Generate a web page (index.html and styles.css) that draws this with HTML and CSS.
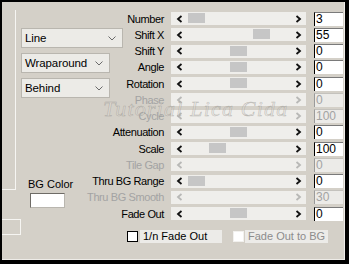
FILE: index.html
```html
<!DOCTYPE html>
<html lang="en">
<head>
  <meta charset="UTF-8" />
  <title>Tubes settings</title>
  <link rel="stylesheet" href="styles.css">
</head>
<body>
  <div class="dialog">
    <div class="side">
      <div class="frame"></div>
      <div class="controls">
        <div class="combo combo-wide"><span>Line</span><svg width="8" height="5"><polyline points="0.5,0.5 4,4 7.5,0.5" /></svg></div>
        <div class="combo"><span>Wraparound</span><svg width="8" height="5"><polyline points="0.5,0.5 4,4 7.5,0.5" /></svg></div>
        <div class="combo"><span>Behind</span><svg width="8" height="5"><polyline points="0.5,0.5 4,4 7.5,0.5" /></svg></div>
        <div class="bg-color">
          <div>BG Color</div>
          <div class="swatch"></div>
        </div>
      </div>
      <div class="stub"></div>
    </div>

    <div class="params">
      <div class="grid" id="grid"></div>
      <div class="checks">
        <label class="check"><span class="box"></span><span class="text">1/n Fade Out</span></label>
        <label class="check off"><span class="box"></span><span class="text">Fade Out to BG</span></label>
      </div>
    </div>

    <div class="watermark">Tutorial Lica Cida</div>
  </div>

  <script>
    const grid = document.getElementById("grid");

    // name, value, thumb offset (px, null = no thumb), enabled
    const rows = [
      ["Number", "3", 17, true],
      ["Shift X", "55", 82, true],
      ["Shift Y", "0", 59, true],
      ["Angle", "0", 59, true],
      ["Rotation", "0", 59, true],
      ["Phase", "0", null, false],
      ["Cycle", "100", null, false],
      ["Attenuation", "0", 59, true],
      ["Scale", "100", 38, true],
      ["Tile Gap", "0", null, false],
      ["Thru BG Range", "0", 17, true],
      ["Thru BG Smooth", "30", null, false],
      ["Fade Out", "0", 59, true]
    ];

    const arrow = pts => `<svg width="7" height="8"><polyline points="${pts}" /></svg>`;

    rows.forEach(([name, value, pos, on]) => {
      const label = document.createElement("div");
      label.className = "label" + (on ? "" : " off");
      label.innerHTML = `<span>${name}</span>`;

      const track = document.createElement("div");
      track.className = "track" + (on ? "" : " off");
      track.innerHTML = arrow("5.5,1 2,4 5.5,7") + arrow("1.5,1 5,4 1.5,7");
      if (pos !== null) {
        const thumb = document.createElement("div");
        thumb.className = "thumb";
        thumb.style.left = pos + "px";
        track.appendChild(thumb);
      }

      const val = document.createElement("div");
      val.className = "value" + (on ? "" : " off");
      val.textContent = value;

      grid.append(label, track, val);
    });
  </script>
</body>
</html>
```

FILE: styles.css
```css
body {
  margin: 0;
  background: #000;
  font-family: "Liberation Sans", Arial, sans-serif;
  font-size: 11px;
  color: #000;
}
.dialog {
  position: relative;
  display: flex;
  width: 343px;
  height: 258px;
  margin: 2px 4px 4px 2px;
  background: #d4d0c8;
  box-sizing: border-box;
  border-right: 1px solid #eeece8;
  border-bottom: 1px solid #eeece8;
  overflow: hidden;
}
.side {
  width: 108px;
  flex: none;
  display: grid;
  grid-template-columns: 14px 1fr;
  align-content: start;
  padding-top: 8px;
}
.frame {
  height: 179px;
  border-right: 1px solid #f6f5f2;
  border-bottom: 1px solid #f6f5f2;
}
.controls {
  padding-top: 18px;
  display: flex;
  flex-direction: column;
}
.combo {
  width: 89px;
  height: 20px;
  margin: 0 0 5px 5px;
  box-sizing: border-box;
  border: 1px solid #b9b6af;
  background: #ecebe7;
  display: flex;
  align-items: center;
  justify-content: space-between;
  padding: 0 6px 0 3px;
  font-size: 11.5px;
  letter-spacing: -0.1px;
}
.combo-wide {
  width: 102px;
}
.combo svg polyline {
  fill: none;
  stroke: #6a6a6a;
  stroke-width: 1;
}
.bg-color {
  margin: 74px 0 0 12px;
  width: 40px;
  text-align: center;
  line-height: 14px;
  white-space: nowrap;
}
.swatch {
  width: 35px;
  height: 15px;
  margin: 2px 0 0 2px;
  box-sizing: border-box;
  background: #fff;
  border: 1px solid #b9b6af;
  border-top-color: #6e6b66;
  border-left-color: #6e6b66;
}
.stub {
  grid-column: 1 / 3;
  width: 19px;
  height: 16px;
  margin-top: 11px;
  box-sizing: border-box;
  border: 1px solid #f6f5f2;
  border-left: none;
}
.params {
  flex: 1;
  padding-top: 10px;
}
.grid {
  display: grid;
  grid-template-columns: 61px 143px 29px;
  grid-auto-rows: 13px;
  row-gap: 3.25px;
}
.label {
  display: flex;
  justify-content: flex-end;
  align-items: center;
  padding-right: 7px;
  white-space: nowrap;
  letter-spacing: -0.4px;
}
.label.off {
  color: #a3a3a3;
}
.track {
  position: relative;
  height: 13px;
  background: #efeeeb;
  display: flex;
  align-items: center;
  justify-content: space-between;
  padding: 0 4px 0 5px;
  margin-right: 8px;
}
.track svg polyline {
  fill: none;
  stroke: #111;
  stroke-width: 1.8;
}
.track.off svg polyline {
  stroke: #b8b8b6;
}
.thumb {
  position: absolute;
  top: 1px;
  width: 17px;
  height: 10px;
  background: #c6c6c6;
}
.value {
  align-self: center;
  height: 14px;
  box-sizing: border-box;
  background: #fff;
  border-left: 1px solid #000;
  border-top: 1px solid #7a7a7a;
  padding-left: 1px;
  font-size: 12px;
  line-height: 13px;
}
.value.off {
  background: #ecebe8;
  color: #a3a3a3;
  border-left-color: #9a9a9a;
  border-top-color: #c4c2bd;
}
.checks {
  display: flex;
  margin: 10px 0 0 17px;
}
.check {
  display: flex;
  align-items: center;
  margin-right: 11px;
}
.check .box {
  width: 11px;
  height: 11px;
  box-sizing: border-box;
  background: #fff;
  border: 1px solid #000;
  margin-right: 2px;
}
.check .text {
  width: 82px;
  height: 13px;
  line-height: 13px;
  padding-left: 3px;
  box-sizing: border-box;
  background: #ecebe8;
}
.check.off .box {
  border-color: #f2f1ee;
  margin-right: 1px;
}
.check.off .text {
  width: 83px;
  color: #8c8c8c;
}
.watermark {
  position: absolute;
  left: 101px;
  top: 96px;
  font-family: "Liberation Serif", serif;
  font-style: italic;
  font-size: 22px;
  line-height: 1;
  letter-spacing: 1.2px;
  color: rgba(222, 219, 213, 0.45);
  -webkit-text-stroke: 0.5px rgba(120, 118, 114, 0.45);
  pointer-events: none;
}
```
